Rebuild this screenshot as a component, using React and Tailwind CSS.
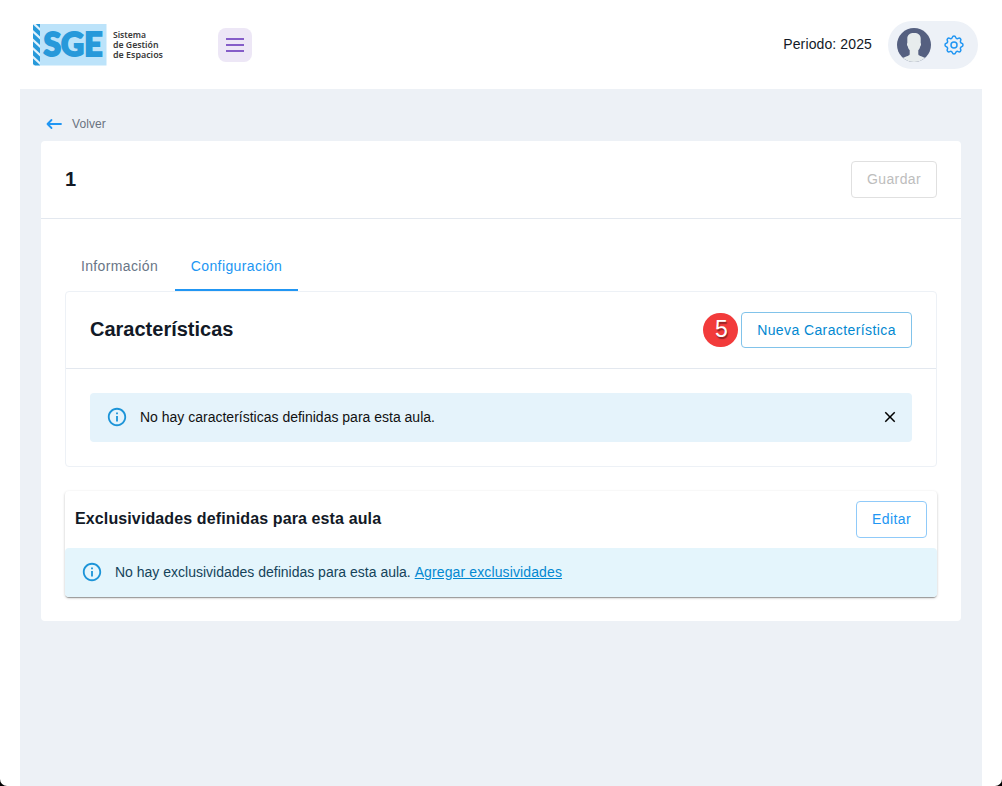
import React, { useState } from 'react';
import { MdClose, MdInfoOutline } from 'react-icons/md';
import { TbSettings } from 'react-icons/tb';

const stripes = [-7, 1.5, 10, 18.5, 27, 35.5];

const tabs = [
    { name: 'Información', className: 'w-[109px] tracking-[0.36px]' },
    { name: 'Configuración', className: 'ml-px w-[123px] tracking-[0.4px]' },
];

function Logo() {
    return (
        <svg width="134" height="46" viewBox="0 0 134 46" className="block">
            <defs>
                <clipPath id="ribbon">
                    <rect x="1" y="2" width="7" height="41.5" />
                </clipPath>
            </defs>
            <rect x="8" y="2" width="66.5" height="41.5" fill="#bce3fa" />
            <g clipPath="url(#ribbon)">
                <rect x="0" y="1" width="8" height="43" fill="#e2f3fd" />
                {stripes.map((y) => (
                    <path key={y} d={`M0 ${y}L8 ${y + 7.5}V${y + 13}L0 ${y + 5.5}Z`} fill="#2799da" />
                ))}
            </g>
            <text x="11.5" y="34" textLength="59" lengthAdjust="spacingAndGlyphs" fill="#2799da" stroke="#2799da" strokeWidth="1.8" fontFamily="Lato, sans-serif" fontWeight="900" fontSize="31.5">SGE</text>
            <g fill="#3a3a3a" fontFamily="'Noto Sans', sans-serif" fontWeight="600" fontSize="9">
                <text x="81" y="16.2" textLength="33" lengthAdjust="spacingAndGlyphs">Sistema</text>
                <text x="81" y="26.2" textLength="45.5" lengthAdjust="spacingAndGlyphs">de Gestión</text>
                <text x="81" y="36.2" textLength="50" lengthAdjust="spacingAndGlyphs">de Espacios</text>
            </g>
        </svg>
    );
}

function Avatar() {
    return (
        <svg width="34" height="34" viewBox="0 0 34 34">
            <defs>
                <clipPath id="avatar">
                    <circle cx="17" cy="17" r="17" />
                </clipPath>
            </defs>
            <g clipPath="url(#avatar)">
                <rect width="34" height="34" fill="#556080" />
                <path d="M17 5c4.300 0 6.700 2 6.700 5.500V15c.6.800.4 2.600-.5 3.400-.4 1.700-1 2.900-1.900 3.900v3.600c0 1 .8 1.500 2 2 2.200.8 4.300 1.500 5.700 2.600V35H5v-4.500c1.400-1.100 3.500-1.800 5.700-2.600 1.200-.5 2-1 2-2v-3.600c-.9-1-1.500-2.200-1.900-3.900-.9-.8-1.100-2.600-.5-3.400v-4.500C10.300 7 12.700 5 17 5Z" fill="#e7eced" />
            </g>
        </svg>
    );
}

function Header() {
    return (
        <header className="flex h-[89px] items-center justify-between pl-8 pr-6">
            <div className="flex items-center">
                <Logo />
                <button className="ml-[52px] flex h-[34px] w-[34px] items-center justify-center rounded-lg bg-[#ede7f6]">
                    <svg width="18" height="16" viewBox="0 0 18 16" stroke="#855dc8" strokeWidth="2">
                        <path d="M0 2H18M0 8H18M0 14H18" />
                    </svg>
                </button>
            </div>
            <div className="flex items-center gap-4">
                <span className="pb-0.5 text-sm tracking-[0.12px] text-[#121926]">Periodo: 2025</span>
                <button className="flex h-12 w-[90px] items-center gap-[11px] rounded-full bg-[#edf1f7] pl-[9px]">
                    <Avatar />
                    <TbSettings size={24} strokeWidth={1.5} className="text-[#2196f3]" />
                </button>
            </div>
        </header>
    );
}

function OutlineButton({ className, children, ...props }) {
    return (
        <button className={`flex items-center justify-center rounded border text-sm tracking-[0.4px] ${className}`} {...props}>
            {children}
        </button>
    );
}

export default function App() {
    const [tab, setTab] = useState('Configuración');
    const [showAlert, setShowAlert] = useState(true);

    return (
        <div className="h-screen bg-black font-['Liberation_Sans',Arial,sans-serif]">
            <div className="flex h-screen flex-col overflow-hidden rounded-b-[7px] bg-white">
                <Header />
                <main className="mx-5 flex-1 bg-[#edf1f6] px-[21px] pt-[18px]">
                    <a className="flex h-[34px] items-center gap-[10px] pl-[5px] text-xs tracking-[0.1px] text-[#6a7380]">
                        <svg width="16" height="12" viewBox="0 0 16 12" fill="none" stroke="#2196f3" strokeWidth="1.8" strokeLinecap="round" strokeLinejoin="round">
                            <path d="M15 6H1.500M5.500 2L1.500 6L5.500 10" />
                        </svg>
                        Volver
                    </a>

                    <section className="h-[480px] rounded bg-white">
                        <div className="flex h-[78px] items-center justify-between border-b border-[#e3e8ef] px-6">
                            <h1 className="pb-0.5 text-xl font-bold text-[#121926]">1</h1>
                            <OutlineButton disabled className="h-[37px] w-[86px] border-[#e0e0e0] pb-0.5 text-[#bdbdbd]">Guardar</OutlineButton>
                        </div>

                        <div className="px-6 pt-6">
                            <div className="flex h-12">
                                {tabs.map(({ name, className }) => (
                                    <button
                                        key={name}
                                        onClick={() => setTab(name)}
                                        className={`border-b-2 text-sm ${className} ${tab === name ? 'border-[#2196f3] text-[#2196f3]' : 'border-transparent text-[#697586]'}`}
                                    >
                                        {name}
                                    </button>
                                ))}
                            </div>

                            <div className="h-[176px] rounded border border-[#edf1f6]">
                                <div className="flex h-[77px] items-center justify-between border-b border-[#e3e8ef] px-6">
                                    <h2 className="pb-0.5 text-xl font-bold text-[#121926]">Características</h2>
                                    <div className="flex items-center gap-[3px]">
                                        <span className="flex h-[34px] w-[35px] items-center justify-center rounded-full bg-[#f23b3b] pb-px pl-0.5 text-[23px] text-white text-shadow-[1px_2px_1px_rgba(0,0,0,0.4)]">5</span>
                                        <OutlineButton className="h-9 w-[171px] border-[#81c3ea] text-[#0288d1]">Nueva Característica</OutlineButton>
                                    </div>
                                </div>
                                {showAlert && (
                                    <div className="mx-6 mt-6 flex h-[49px] items-center rounded bg-[#e5f3fb] pb-px pl-4 pr-[13px]">
                                        <MdInfoOutline size={22} className="text-[#1c94d8]" />
                                        <p className="ml-3 flex-1 text-sm text-[#111111]">No hay características definidas para esta aula.</p>
                                        <button onClick={() => setShowAlert(false)}>
                                            <MdClose size={18} />
                                        </button>
                                    </div>
                                )}
                            </div>

                            {/* Exclusividades */}
                            <div className="mt-6 h-[106px] rounded shadow-[0_2px_1px_-1px_rgba(0,0,0,0.2),0_1px_1px_0_rgba(0,0,0,0.14),0_1px_3px_0_rgba(0,0,0,0.2)]">
                                <div className="flex h-[57px] items-center justify-between px-[10px]">
                                    <h3 className="pb-0.5 text-base font-bold tracking-[0.12px] text-[#121926]">Exclusividades definidas para esta aula</h3>
                                    <OutlineButton className="h-[37px] w-[71px] border-[#90caf9] pb-0.5 text-[#2196f3]">Editar</OutlineButton>
                                </div>
                                <div className="flex h-[49px] items-center rounded bg-[#e4f5fc] px-4 pb-px">
                                    <MdInfoOutline size={22} className="text-[#1c94d8]" />
                                    <p className="ml-3 text-sm text-[#14435a]">
                                        No hay exclusividades definidas para esta aula. <a className="tracking-[0.12px] text-[#0288d1] underline">Agregar exclusividades</a>
                                    </p>
                                </div>
                            </div>
                        </div>
                    </section>
                </main>
            </div>
        </div>
    );
}
